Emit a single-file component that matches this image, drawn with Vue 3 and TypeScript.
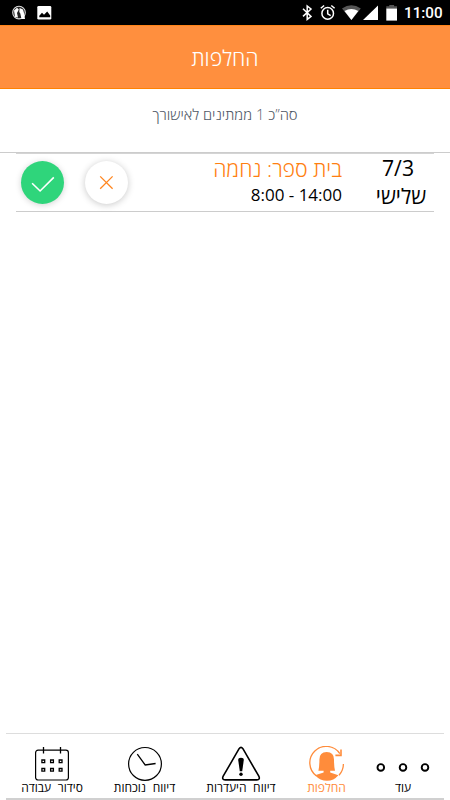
<script setup lang="ts">
interface NavItem {
  key: string
  label: string
  active?: boolean
}

interface Shift {
  date: string
  day: string
  title: string
  hours: string
}

const shifts: Shift[] = [
  { date: '7/3', day: 'שלישי', title: 'בית ספר: נחמה', hours: '8:00 - 14:00' },
]

const navItems: NavItem[] = [
  { key: 'schedule', label: 'סידור עבודה' },
  { key: 'attendance', label: 'דיווח נוכחות' },
  { key: 'absence', label: 'דיווח היעדרות' },
  { key: 'replace', label: 'החלפות', active: true },
  { key: 'more', label: 'עוד' },
]
</script>

<template>
  <div class="screen">
    <div class="status">
      <svg class="status-left" width="60" height="25" viewBox="0 0 60 25">
        <circle cx="19" cy="12.6" r="6.3" fill="#222" stroke="#ddd" stroke-width="1.1" />
        <path d="M14 10.5 17 7.8 18.8 9.5 17 13 18 17.5 15 17ZM19.6 8 23 9.5 24 13l1 6H21.5l-1.2-5.5-1-1.5Z" fill="#fff" />
        <rect x="37.3" y="6" width="14" height="13.6" rx="1.3" fill="#fff" />
        <path d="M39.3 17.2v-1.5l2.7-3 2 2 3.2-3.3 3 4.2v1.6Z" fill="#000" />
      </svg>
      <div class="status-right">
        <svg width="104" height="25" viewBox="0 0 104 25">
          <path d="M3 8.8 11 16.4 7.2 19.4V6L11 9 3 16.4" fill="none" stroke="#fff" stroke-width="1.5" />
          <g fill="none" stroke="#fff" stroke-width="1.5">
            <circle cx="27.7" cy="13.4" r="5.8" />
            <path d="M27.7 9.8v4l3 1.8M20.8 8.3l3.3-2.8M34.6 8.3l-3.3-2.8" />
          </g>
          <path d="M42 8.6Q51.4 1.7 60.8 8.6L51.4 20Z" fill="#555" />
          <path d="M44.5 11Q51.4 6.9 58.3 11L51.4 20Z" fill="#fff" />
          <path d="M63 20 78 5.4V20Z" fill="#fff" />
          <path d="M86.3 6.2h3V5h4.8v1.2H97V9H86.3Z" fill="#555" />
          <path d="M86.3 8.6H97v12H86.3Z" fill="#fff" />
        </svg>
        <span class="clock">11:00</span>
      </div>
    </div>

    <header class="header"><h1 class="title">החלפות</h1></header>

    <p class="summary"><span class="summary-text">סה”כ 1 ממתינים לאישורך</span></p>

    <main class="list" dir="rtl">
      <article v-for="s in shifts" :key="s.date" class="shift">
        <div class="when">
          <span class="date">{{ s.date }}</span>
          <span class="day">{{ s.day }}</span>
        </div>
        <div class="details">
          <span class="place">{{ s.title }}</span>
          <span class="hours" dir="ltr">{{ s.hours }}</span>
        </div>
        <div class="actions">
          <button class="round reject" type="button">
            <svg width="43" height="43" viewBox="0 0 43 43"><path d="M15.2 15.4 27.6 27.8M27.6 15.4 15.2 27.8" fill="none" stroke="#ff8620" stroke-width="1.3" /></svg>
          </button>
          <button class="round approve" type="button">
            <svg width="43" height="43" viewBox="0 0 43 43"><path d="M11.1 22.2 19.1 30 32.8 16.4" fill="none" stroke="#fff" stroke-width="1.6" /></svg>
          </button>
        </div>
      </article>
    </main>

    <nav class="nav">
      <a v-for="n in navItems" :key="n.key" class="item" :class="[n.key, { active: n.active }]">
        <svg v-if="n.key === 'schedule'" class="icon" width="36" height="36" viewBox="0 0 36 36" fill="none" stroke="#000">
          <rect x="1.6" y="4.2" width="32.8" height="29.8" rx="2.5" stroke-width="1.2" />
          <path d="M9.5 1v6.5M26.5 1v6.5" stroke-width="1.3" />
          <path d="M7.9 14h2.8v2.6H7.9ZM16.6 14h2.8v2.6h-2.8ZM25.2 14H28v2.6h-2.8ZM7.9 22.5h2.8v2.6H7.9ZM16.6 22.5h2.8v2.6h-2.8ZM25.2 22.5H28v2.6h-2.8Z" stroke-width="1.3" />
        </svg>
        <svg v-else-if="n.key === 'attendance'" class="icon" width="36" height="36" viewBox="0 0 36 36" fill="none" stroke="#000">
          <circle cx="18" cy="17.9" r="16.4" stroke-width="1.2" />
          <path d="M10.3 8.2 18.2 19 28.6 17.5" stroke-width="1.3" />
        </svg>
        <svg v-else-if="n.key === 'absence'" class="icon" width="40" height="36" viewBox="0 0 40 36">
          <path d="M18.1 2.7Q20 .1 21.9 2.7L37.8 30.2Q39.5 33.7 35.8 33.9H4.2Q.5 33.7 2.2 30.2Z" fill="none" stroke="#000" stroke-width="1.6" />
          <path d="M17.2 14Q17.2 11.8 20 11.8T22.8 14L21.2 25.2H18.8Z" />
          <circle cx="20" cy="28.2" r="1.7" />
        </svg>
        <svg v-else-if="n.key === 'replace'" class="icon" width="36" height="36" viewBox="0 0 36 36" fill="#ff8c3b">
          <path d="M7.5 30A16.4 16.4 0 1 1 30.8 7.6M34.4 18A16.4 16.4 0 0 1 30 29.2" fill="none" stroke="#ff8c3b" stroke-width="1.3" />
          <path d="M26.4 9.4H32V3.4" fill="none" stroke="#ff8c3b" stroke-width="1.6" />
          <path d="M9.4 24.7Q10.4 21 10.4 13.5Q10.4 6 17.7 6T25 13.5Q25 21 26 24.7H21.2V26.6L29.4 29.3Q24.8 34.8 18 34.8T6 29.3L14.6 26.6V24.7Z" />
        </svg>
        <svg v-else class="icon" width="56" height="36" viewBox="0 0 56 36" fill="none" stroke="#000" stroke-width="1.9">
          <circle cx="5.8" cy="21.4" r="3.3" />
          <circle cx="28" cy="21.4" r="3.3" />
          <circle cx="50" cy="21.4" r="3.3" />
        </svg>
        <span class="label" dir="rtl">{{ n.label }}</span>
      </a>
    </nav>
  </div>
</template>

<style>
body { margin: 0; background: #fff; }
</style>

<style scoped>
.screen { width: 450px; height: 800px; display: flex; flex-direction: column; background: #fff; font-family: "Open Sans", "Noto Sans", sans-serif; overflow: hidden; }
.status { height: 25px; flex: none; background: #000; display: flex; justify-content: space-between; }
.status-right { display: flex; width: 150px; }
.clock { color: #fff; font: 500 15.2px/27px Roboto, sans-serif; white-space: nowrap; }
.header { height: 64px; flex: none; box-sizing: border-box; background: #ff8f3e; border-top: 1px solid #ff8418; border-bottom: 1px solid #ff8200; display: flex; align-items: center; justify-content: center; }
.title { margin: 0; padding-top: 2px; color: #fff; font-size: 21.3px; line-height: 30px; font-weight: 300; direction: rtl; }
.summary { margin: 0; height: 64px; flex: none; box-sizing: border-box; padding-top: 14px; border-bottom: 1px solid #ccc; text-align: center; direction: rtl; color: #505866; font-size: 14.8px; line-height: 22px; font-weight: 300; }
.summary-text { white-space: nowrap; }
.list { flex: 1; padding: 0 16px; }
.shift { height: 59px; box-sizing: border-box; border-top: 1px solid #d4d4d4; border-bottom: 1px solid #ccc; display: flex; align-items: flex-start; }
.when { width: 66px; margin-left: 26px; display: flex; flex-direction: column; align-items: center; font-size: 21.2px; line-height: 28px; white-space: nowrap; }
.date { padding-right: 6px; }
.details { display: flex; flex-direction: column; align-items: flex-start; flex: 1; white-space: nowrap; }
.place { color: #ff7f11; font-size: 21.3px; line-height: 29px; font-weight: 300; }
.hours { font-size: 17px; line-height: 23px; }
.actions { display: flex; gap: 21px; padding: 7px 0 0 5px; }
.round { width: 43px; height: 43px; padding: 0; border: 0; border-radius: 50%; background: #fff; display: flex; box-shadow: 0 1px 7px rgba(0, 0, 0, .22); }
.approve { background: #2fd57b; box-shadow: 0 1px 6px rgba(0, 0, 0, .18); }
.nav { flex: none; height: 67px; box-sizing: border-box; margin: 0 6px; border-top: 1px solid #ddd; border-bottom: 2px solid #d0d0d0; display: grid; grid-template-columns: 92px 93px 100px 71px 82px; }
.item { display: flex; flex-direction: column; align-items: center; padding-top: 12px; min-width: 0; color: #000; }
.icon { flex: none; }
.label { font-size: 12px; line-height: 14px; white-space: nowrap; margin-top: -1px; word-spacing: 3.5px; }
.active { color: #ff8c3b; }
</style>
